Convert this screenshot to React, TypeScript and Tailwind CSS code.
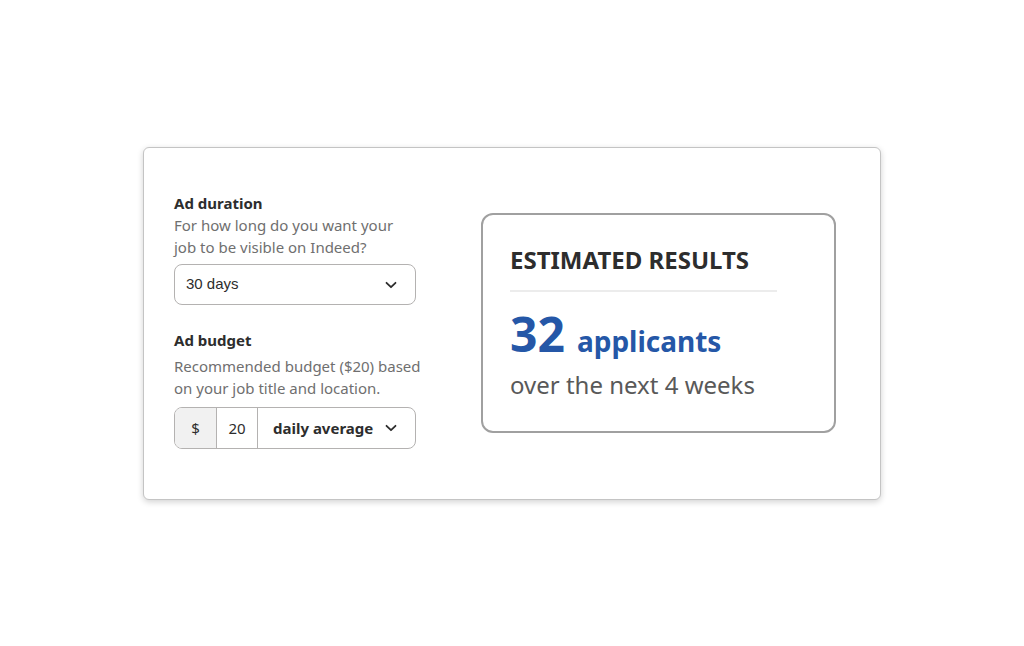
import React from "react";

function Chevron({ className = "" }: { className?: string }) {
  return (
    <svg width="14" height="14" viewBox="0 0 14 14" className={className} fill="none">
      <path d="M2.5 4.8 L7 9.2 L11.5 4.8" stroke="#2d2d2d" strokeWidth="1.8" strokeLinecap="round" strokeLinejoin="round" />
    </svg>
  );
}

export default function App() {
  return (
    <div className="w-[1024px] h-[646px] bg-white flex items-start justify-center pt-[147px]" style={{ fontFamily: '"Noto Sans", sans-serif' }}>
      <div className="w-[738px] h-[353px] border border-[#c4c4c4] rounded-[6px] bg-white shadow-[0_2px_6px_rgba(0,0,0,0.18)] flex pl-[30px] pt-[44px]">
        <div className="w-[242px] flex flex-col">
          <div className="text-[15px] font-bold text-[#2d2d2d] leading-[22px]">Ad duration</div>
          <div className="w-[260px] text-[15px] text-[#6f6f6f] leading-[22px]">For how long do you want your<br />job to be visible on Indeed?</div>
          <div className="mt-[6px] h-[41px] border border-[#b4b2b1] rounded-[8px] flex items-center justify-between pl-[11px] pr-[17px]">
            <span className="text-[15px] text-[#2d2d2d]" style={{ fontFamily: '"Liberation Sans", Arial, sans-serif' }}>30 days</span>
            <Chevron />
          </div>
          <div className="mt-[24px] text-[15px] font-bold text-[#2d2d2d] leading-[22px]">Ad budget</div>
          <div className="mt-[4px] w-[260px] text-[15px] text-[#6f6f6f] leading-[22px]">Recommended budget ($20) based<br />on your job title and location.</div>
          <div className="mt-[8px] h-[42px] border border-[#b4b2b1] rounded-[8px] flex overflow-hidden">
            <div className="w-[42px] bg-[#f1f1f1] border-r border-[#b4b2b1] flex items-center justify-center text-[15px] text-[#2d2d2d]">$</div>
            <div className="w-[41px] border-r border-[#b4b2b1] flex items-center justify-center text-[15px] text-[#2d2d2d]">20</div>
            <div className="flex-1 flex items-center justify-between pl-[15px] pr-[17px]">
              <span className="text-[15px] font-bold text-[#2d2d2d]">daily average</span>
              <Chevron />
            </div>
          </div>
        </div>
        <div className="ml-[65px] mt-[21px] w-[355px] h-[220px] border-2 border-[#a0a0a0] rounded-[12px] pl-[27px] pt-[28px]">
          <div className="text-[24px] font-bold text-[#2d2d2d] leading-[34px]">ESTIMATED RESULTS</div>
          <div className="mt-[13px] w-[267px] h-[2px] bg-[#ececec]" />
          <div className="mt-[13px] flex items-baseline text-[#2557a7] font-bold">
            <span className="text-[48px] leading-[58px]">32</span>
            <span className="ml-[12px] text-[28px]">applicants</span>
          </div>
          <div className="mt-[7px] text-[24px] text-[#595959] leading-[30px]">over the next 4 weeks</div>
        </div>
      </div>
    </div>
  );
}
